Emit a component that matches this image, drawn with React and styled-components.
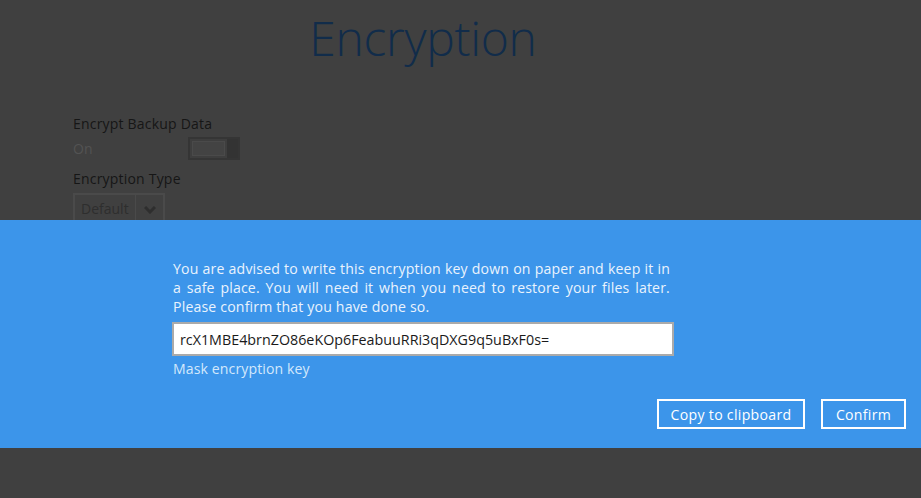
import React from "react";
import styled, { createGlobalStyle } from "styled-components";

const Global = createGlobalStyle`
  html, body { margin: 0; padding: 0; background: #404040; }
  body { font-family: "Open Sans", "Noto Sans", sans-serif; }
  #root { width: 921px; height: 498px; overflow: hidden; }
`;

const Screen = styled.div`
  position: relative;
  width: 921px;
  height: 498px;
  background: #404040;
  overflow: hidden;
`;

const Page = styled.div`
  display: flex;
  flex-direction: column;
  padding: 0 0 0 73px;
`;

const Title = styled.h1`
  margin: 0;
  padding: 4px 0 0 0;
  width: 700px;
  text-align: center;
  font-size: 48px;
  font-weight: 300;
  line-height: 68px;
  color: #112c4a;
  letter-spacing: -0.3px;
`;

const Form = styled.div`
  display: flex;
  flex-direction: column;
  margin-top: 42px;
`;

const Label = styled.div`
  font-size: 14px;
  line-height: 20px;
  color: #161616;
  letter-spacing: 0.2px;
`;

const ToggleRow = styled.div`
  display: flex;
  align-items: center;
  height: 28px;
  margin-bottom: 7px;
`;

const Value = styled.span`
  width: 115px;
  font-size: 14px;
  color: #535353;
`;

const Toggle = styled.div`
  display: flex;
  width: 52px;
  height: 23px;
  box-sizing: border-box;
  border: 2px solid #353535;
  background: #3e3e3e;
`;

const ToggleTrack = styled.div`
  flex: 1;
  margin: 2px 2px 2px 2px;
  border: 1px solid #4a4a4a;
  background: #434343;
`;

const ToggleKnob = styled.div`
  width: 11px;
  background: #333333;
`;

const Select = styled.div`
  display: flex;
  margin-top: 4px;
  width: 92px;
  height: 32px;
  box-sizing: border-box;
  border: 2px solid #4a4a4a;
  background: #404040;
`;

const SelectText = styled.div`
  flex: 1;
  padding: 4px 0 0 6px;
  font-size: 14px;
  color: #2e2e2e;
  border-right: 1px solid #4a4a4a;
`;

const SelectArrow = styled.div`
  width: 27px;
  display: flex;
  justify-content: center;
  padding-top: 11px;
`;

const Dialog = styled.div`
  position: absolute;
  left: 0;
  top: 220px;
  width: 921px;
  height: 228px;
  background: #3c95ea;
  display: flex;
  flex-direction: column;
  box-sizing: border-box;
  padding: 39px 15px 0 173px;
`;

const Message = styled.p`
  margin: 0;
  width: 497px;
  font-size: 14.1px;
  line-height: 19px;
  letter-spacing: 0.17px;
  color: #eaf3fd;
  text-align: justify;
`;

const KeyInput = styled.div`
  margin-top: 6px;
  margin-left: -1px;
  width: 502px;
  height: 34px;
  box-sizing: border-box;
  border: 2px solid #aaaaaa;
  background: #ffffff;
  padding: 0 0 0 6px;
  display: flex;
  align-items: center;
  font-size: 14.3px;
  color: #1a1a1a;
`;

const MaskLink = styled.div`
  margin-top: 3px;
  font-size: 14.1px;
  line-height: 19px;
  color: #d3e8fc;
  letter-spacing: 0.1px;
`;

const Actions = styled.div`
  display: flex;
  justify-content: flex-end;
  gap: 16px;
  margin-top: 21px;
`;

const Button = styled.button`
  height: 30px;
  box-sizing: border-box;
  border: 2px solid #ffffff;
  background: transparent;
  color: #ffffff;
  font-family: "Open Sans", "Noto Sans", sans-serif;
  font-size: 14.1px;
  letter-spacing: 0.3px;
  padding: 0;
  width: ${(p) => p.$w}px;
  cursor: pointer;
`;

export default function App() {
  return (
    <Screen>
      <Global />
      <Page>
        <Title>Encryption</Title>
        <Form>
          <Label>Encrypt Backup Data</Label>
          <ToggleRow>
            <Value>On</Value>
            <Toggle>
              <ToggleTrack />
              <ToggleKnob />
            </Toggle>
          </ToggleRow>
          <Label>Encryption Type</Label>
          <Select>
            <SelectText>Default</SelectText>
            <SelectArrow>
              <svg width="12" height="8" viewBox="0 0 12 8">
                <path d="M1 1 L6 6 L11 1" fill="none" stroke="#2e2e2e" strokeWidth="3" />
              </svg>
            </SelectArrow>
          </Select>
        </Form>
      </Page>
      <Dialog>
        <Message>
          You are advised to write this encryption key down on paper and keep it in a safe place. You will need it when you need to restore your files later. Please confirm that you have done so.
        </Message>
        <KeyInput>rcX1MBE4brnZO86eKOp6FeabuuRRi3qDXG9q5uBxF0s=</KeyInput>
        <MaskLink>Mask encryption key</MaskLink>
        <Actions>
          <Button $w={148}>Copy to clipboard</Button>
          <Button $w={85}>Confirm</Button>
        </Actions>
      </Dialog>
    </Screen>
  );
}
